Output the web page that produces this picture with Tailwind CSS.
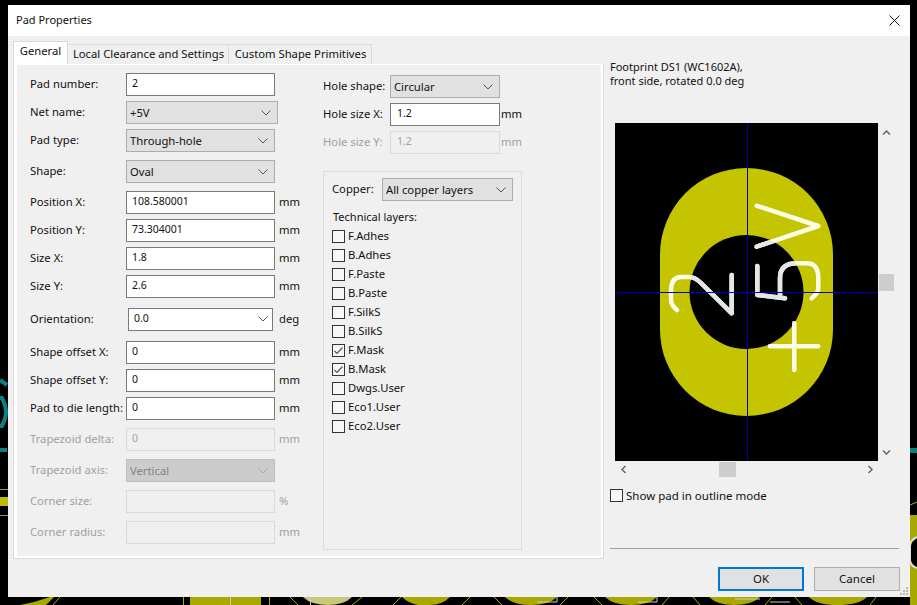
<!DOCTYPE html>
<html><head><meta charset="utf-8"><script src="https://cdn.jsdelivr.net/npm/@tailwindcss/browser@4"></script></head>
<body class="m-0 p-0">
<div class="relative w-[917px] h-[605px] bg-black overflow-hidden font-['Noto_Sans',sans-serif] text-[11.25px] text-[#111]">
  <!-- PCB canvas behind dialog -->
  <svg class="absolute inset-0" width="917" height="605" viewBox="0 0 917 605">
    <g fill="#a8a800">
      <path d="M20 605l14-3 16-5h4l-8 8zM190 597h71v8h-71zM402 597h48q-8 8-20 8h-12q-10-2-16-8zM505 597h52q-8 8-26 8-18 0-26-8zM605 597h52q-8 8-26 8-18 0-26-8zM709 597h51q-8 8-26 8-17 0-25-8zM809 597h58q-8 8-30 8-20 0-28-8z"/>
      <path d="M303 597h49q-8 8-24 8-17 0-25-8z" fill="#c8c878"/>
      <path d="M910 515h7v90h-7z"/>
    </g>
    <path d="M917 538a20 20 0 0 0-7 8v14a20 20 0 0 0 7 8z" fill="#000"/>
    <path d="M917 537q-7 3-7 9v14q0 6 7 8" fill="none" stroke="#ddd" stroke-width="2"/>
    <path d="M0 497h8v9H0z" fill="#bdbd00"/>
    <g fill="none" stroke="#a8a800"><path d="M53 605l7-8M183.500 597v8M269.500 597v8M290 597l8 8M352 605l10-8M393 605l8-8M462 605l8-8M494 597l8 8M560 605l8-8M594 597l8 8M662 605l7-8M693 597l7 8M765 605l7-8M795 597l7 8M870 605l6-8M0 489.500h8M910 505l7-3"/></g>
    <g fill="none" stroke="#ccc"><path d="M230.500 597v8M310.500 597v8M537 602h20v-5M638 602h19v-5M735 599h25M770 602h20"/></g>
    <path d="M0 515.500h8" stroke="#888"/>
    <g fill="none" stroke="#0c7f7f" stroke-width="4"><path d="M0 380l7 5M0 398h2q4 8 4 14t-4 14H0"/></g>
    <path d="M0 448h7v4H0zM910 448h7v5h-7z" fill="#0c7f7f"/>
  </svg>

  <!-- Dialog window -->
  <div class="absolute left-[8px] top-[5px] w-[902px] h-[592px] bg-[#f0f0f0] flex flex-col">
    <div class="h-[31px] shrink-0 bg-white flex items-center justify-between pl-[8px] pr-[10px] text-[11px]">
      <span>Pad Properties</span>
      <svg width="11" height="11" viewBox="0 0 11 11"><path d="M.5.5l10 10M10.500.5l-10 10" stroke="#111" fill="none"/></svg>
    </div>
    <div class="flex flex-1 min-h-0 pl-[5px]">
      <!-- Left notebook -->
      <div class="w-[591px] shrink-0 flex flex-col pt-[5px]">
        <div class="flex h-[23px] items-end">
          <div class="h-[23px] w-[55px] bg-white border border-b-0 border-[#d9d9d9] flex items-center justify-center pb-[3px]">General</div>
          <div class="h-[20px] w-[161px] bg-[#f0f0f0] border-t border-r border-[#d9d9d9] flex items-center justify-center pb-[1px] pl-[1px]">Local Clearance and Settings</div>
          <div class="h-[20px] w-[143px] bg-[#f0f0f0] border-t border-r border-[#d9d9d9] flex items-center justify-center pb-[1px] pl-[1px]">Custom Shape Primitives</div>
        </div>
        <div class="h-[495px] border border-t-0 border-[#d9d9d9] bg-white pl-[3px] pr-[2px] pb-[2px] pt-[1px]">
          <div class="relative h-full bg-[#f0f0f0] flex pl-[13px]">
            <!-- column 1 -->
            <div class="w-[293px] shrink-0 flex flex-col pt-[8px]">
              <div class="flex items-center h-[23px]"><span class="w-[96px] mb-[1px]">Pad number:</span><div class="w-[149px] h-[23px] bg-white border border-[#7a7a7a] px-[5px] pb-[1px] flex items-center text-[10.5px]">2</div></div>
              <div class="flex items-center h-[23px] mt-[5px]"><span class="w-[96px] mb-[1px]">Net name:</span><div class="w-[152px] h-[23px] bg-[#e1e1e1] border border-[#adadad] pl-[3px] pr-[6px] pt-[1px] flex items-center justify-between">+5V<svg width="10" height="6" viewBox="0 0 10 6"><path d="M.5.500l4.500 4.500 4.500-4.500" fill="none" stroke="#555"/></svg></div></div>
              <div class="flex items-center h-[23px] mt-[5px]"><span class="w-[96px] mb-[1px]">Pad type:</span><div class="w-[149px] h-[23px] bg-[#e1e1e1] border border-[#adadad] pl-[3px] pr-[6px] pt-[1px] flex items-center justify-between">Through-hole<svg width="10" height="6" viewBox="0 0 10 6"><path d="M.5.500l4.500 4.500 4.500-4.500" fill="none" stroke="#555"/></svg></div></div>
              <div class="flex items-center h-[23px] mt-[8px]"><span class="w-[96px] mb-[1px]">Shape:</span><div class="w-[149px] h-[23px] bg-[#e1e1e1] border border-[#adadad] pl-[3px] pr-[6px] pt-[1px] flex items-center justify-between">Oval<svg width="10" height="6" viewBox="0 0 10 6"><path d="M.5.500l4.500 4.500 4.500-4.500" fill="none" stroke="#555"/></svg></div></div>
              <div class="flex items-center h-[23px] mt-[8px]"><span class="w-[96px] mb-[1px]">Position X:</span><div class="w-[149px] h-[23px] bg-white border border-[#7a7a7a] px-[5px] pb-[1px] flex items-center text-[10.5px]">108.580001</div><span class="ml-[4px]">mm</span></div>
              <div class="flex items-center h-[23px] mt-[5px]"><span class="w-[96px] mb-[1px]">Position Y:</span><div class="w-[149px] h-[23px] bg-white border border-[#7a7a7a] px-[5px] pb-[1px] flex items-center text-[10.5px]">73.304001</div><span class="ml-[4px]">mm</span></div>
              <div class="flex items-center h-[23px] mt-[5px]"><span class="w-[96px] mb-[1px]">Size X:</span><div class="w-[149px] h-[23px] bg-white border border-[#7a7a7a] px-[5px] pb-[1px] flex items-center text-[10.5px]">1.8</div><span class="ml-[4px]">mm</span></div>
              <div class="flex items-center h-[23px] mt-[5px]"><span class="w-[96px] mb-[1px]">Size Y:</span><div class="w-[149px] h-[23px] bg-white border border-[#7a7a7a] px-[5px] pb-[1px] flex items-center text-[10.5px]">2.6</div><span class="ml-[4px]">mm</span></div>
              <div class="flex items-center h-[23px] mt-[10px]"><span class="w-[98px] mb-[1px]">Orientation:</span><div class="w-[145px] h-[23px] bg-white border border-[#7a7a7a] pl-[5px] pr-[4px] pb-[1px] flex items-center justify-between text-[10.5px]">0.0<svg width="10" height="6" viewBox="0 0 10 6"><path d="M.5.500l4.500 4.500 4.500-4.500" fill="none" stroke="#555"/></svg></div><span class="ml-[6px]">deg</span></div>
              <div class="flex items-center h-[23px] mt-[10px]"><span class="w-[96px] mb-[1px]">Shape offset X:</span><div class="w-[149px] h-[23px] bg-white border border-[#7a7a7a] px-[5px] pb-[1px] flex items-center text-[10.5px]">0</div><span class="ml-[4px]">mm</span></div>
              <div class="flex items-center h-[23px] mt-[5px]"><span class="w-[96px] mb-[1px]">Shape offset Y:</span><div class="w-[149px] h-[23px] bg-white border border-[#7a7a7a] px-[5px] pb-[1px] flex items-center text-[10.5px]">0</div><span class="ml-[4px]">mm</span></div>
              <div class="flex items-center h-[23px] mt-[5px]"><span class="w-[96px] mb-[1px] whitespace-nowrap">Pad to die length:</span><div class="w-[149px] h-[23px] bg-white border border-[#7a7a7a] px-[5px] pb-[1px] flex items-center text-[10.5px]">0</div><span class="ml-[4px]">mm</span></div>
              <div class="flex items-center h-[23px] mt-[8px] text-[#a0a0a0]"><span class="w-[96px] mb-[1px]">Trapezoid delta:</span><div class="w-[149px] h-[23px] bg-[#f0f0f0] border border-[#d9d9d9] px-[5px] pb-[1px] flex items-center text-[10.5px]">0</div><span class="ml-[4px]">mm</span></div>
              <div class="flex items-center h-[23px] mt-[8px] text-[#a0a0a0]"><span class="w-[96px] mb-[1px]">Trapezoid axis:</span><div class="w-[149px] h-[23px] bg-[#cccccc] border border-[#bfbfbf] pl-[3px] pr-[6px] pt-[1px] flex items-center justify-between text-[#838383]">Vertical<svg width="10" height="6" viewBox="0 0 10 6"><path d="M.5.500l4.500 4.500 4.500-4.500" fill="none" stroke="#a8a8a8"/></svg></div></div>
              <div class="flex items-center h-[23px] mt-[8px] text-[#a0a0a0]"><span class="w-[96px] mb-[1px]">Corner size:</span><div class="w-[149px] h-[23px] bg-[#f0f0f0] border border-[#d9d9d9]"></div><span class="ml-[4px]">%</span></div>
              <div class="flex items-center h-[23px] mt-[8px] text-[#a0a0a0]"><span class="w-[96px] mb-[1px]">Corner radius:</span><div class="w-[149px] h-[23px] bg-[#f0f0f0] border border-[#d9d9d9]"></div><span class="ml-[4px]">mm</span></div>
            </div>
            <!-- column 2 -->
            <div class="w-[200px] shrink-0 flex flex-col pt-[10px]">
              <div class="flex items-center h-[23px]"><span class="w-[67px] mb-[1px]">Hole shape:</span><div class="w-[110px] h-[23px] bg-[#e1e1e1] border border-[#adadad] pl-[3px] pr-[6px] pt-[1px] flex items-center justify-between">Circular<svg width="10" height="6" viewBox="0 0 10 6"><path d="M.5.500l4.500 4.500 4.500-4.500" fill="none" stroke="#555"/></svg></div></div>
              <div class="flex items-center h-[23px] mt-[5px]"><span class="w-[67px] mb-[1px]">Hole size X:</span><div class="w-[110px] h-[23px] bg-white border border-[#7a7a7a] px-[6px] pb-[1px] flex items-center text-[10.5px]">1.2</div><span class="ml-[1px]">mm</span></div>
              <div class="flex items-center h-[23px] mt-[5px] text-[#a0a0a0]"><span class="w-[67px] mb-[1px]">Hole size Y:</span><div class="w-[110px] h-[23px] bg-[#f0f0f0] border border-[#d9d9d9] px-[6px] pb-[1px] flex items-center text-[10.5px]">1.2</div><span class="ml-[1px]">mm</span></div>
              <div class="w-[199px] h-[379px] mt-[17px] border border-[#dcdcdc] pl-[8px] pt-[6px] flex flex-col">
                <div class="flex items-center h-[23px]"><span class="w-[50px] mb-[1px]">Copper:</span><div class="w-[131px] h-[23px] bg-[#e1e1e1] border border-[#adadad] pl-[3px] pr-[6px] pt-[1px] flex items-center justify-between">All copper layers<svg width="10" height="6" viewBox="0 0 10 6"><path d="M.5.500l4.500 4.500 4.500-4.500" fill="none" stroke="#555"/></svg></div></div>
                <div class="mt-[8px] pl-[1px] h-[16px] leading-[16px] text-[11px]">Technical layers:</div>
                <div class="flex flex-col mt-[2px]">
                  <label class="h-[19px] flex items-center gap-[3px]"><span class="w-[13px] h-[13px] bg-[#f7f7f7] border border-[#333]"></span>F.Adhes</label>
                  <label class="h-[19px] flex items-center gap-[3px]"><span class="w-[13px] h-[13px] bg-[#f7f7f7] border border-[#333]"></span>B.Adhes</label>
                  <label class="h-[19px] flex items-center gap-[3px]"><span class="w-[13px] h-[13px] bg-[#f7f7f7] border border-[#333]"></span>F.Paste</label>
                  <label class="h-[19px] flex items-center gap-[3px]"><span class="w-[13px] h-[13px] bg-[#f7f7f7] border border-[#333]"></span>B.Paste</label>
                  <label class="h-[19px] flex items-center gap-[3px]"><span class="w-[13px] h-[13px] bg-[#f7f7f7] border border-[#333]"></span>F.SilkS</label>
                  <label class="h-[19px] flex items-center gap-[3px]"><span class="w-[13px] h-[13px] bg-[#f7f7f7] border border-[#333]"></span>B.SilkS</label>
                  <label class="h-[19px] flex items-center gap-[3px]"><span class="w-[13px] h-[13px] bg-[#f7f7f7] border border-[#333] flex items-center justify-center"><svg width="11" height="11" viewBox="0 0 11 11"><path d="M1.500 6l2.500 2.500 5.500-6" fill="none" stroke="#555" stroke-width="1.200"/></svg></span>F.Mask</label>
                  <label class="h-[19px] flex items-center gap-[3px]"><span class="w-[13px] h-[13px] bg-[#f7f7f7] border border-[#333] flex items-center justify-center"><svg width="11" height="11" viewBox="0 0 11 11"><path d="M1.500 6l2.500 2.500 5.500-6" fill="none" stroke="#555" stroke-width="1.200"/></svg></span>B.Mask</label>
                  <label class="h-[19px] flex items-center gap-[3px]"><span class="w-[13px] h-[13px] bg-[#f7f7f7] border border-[#333]"></span>Dwgs.User</label>
                  <label class="h-[19px] flex items-center gap-[3px]"><span class="w-[13px] h-[13px] bg-[#f7f7f7] border border-[#333]"></span>Eco1.User</label>
                  <label class="h-[19px] flex items-center gap-[3px]"><span class="w-[13px] h-[13px] bg-[#f7f7f7] border border-[#333]"></span>Eco2.User</label>
                </div>
              </div>
            </div>
          </div>
        </div>
      </div>
      <!-- Right preview -->
      <div class="flex-1 flex flex-col pl-[6px] pr-[11px] min-w-0">
        <div class="pt-[24px] h-[87px] leading-[14px] text-[11px] shrink-0">Footprint DS1 (WC1602A),<br>front side, rotated 0.0 deg</div>
        <div class="flex">
          <div class="ml-[5px] w-[263px] h-[338px] bg-black relative shrink-0">
            <svg width="263" height="338" viewBox="0 0 263 338" class="block">
              <defs>
                <clipPath id="hole"><circle cx="131.500" cy="169" r="57"/></clipPath>
                <g id="silk" fill="none" stroke-width="4.500" stroke-linecap="round" stroke-linejoin="round">
                  <path d="M141.700 82.700L203.300 103 141.700 123.700"/>
                  <path d="M142.300 143v29l27.700 3.300"/>
                  <path d="M165 172v-16.700q0-15 16.700-15h10q11.600 0 11.600 15v10q0 5-6.600 10"/>
                  <path d="M179.300 200.300V247M155 223.300h48.300"/>
                  <path d="M116.700 152v38.300L86 160q-6-6-12-6h-8q-10 0-10 14v9q0 5 6 10"/>
                </g>
              </defs>
              <path d="M45 131.500a86.500 86.500 0 0 1 173 0v75a86.500 86.500 0 0 1-173 0z" fill="#c4c400"/>
              <circle cx="131.500" cy="169" r="57" fill="#000"/>
              <use href="#silk" stroke="#fdfde6"/>
              <g clip-path="url(#hole)"><use href="#silk" stroke="#e6e6e6"/></g>
              <path d="M132.500 0v338" stroke="#0000a8"/>
              <path d="M0 169.500h263" stroke="#0000c8"/>
            </svg>
          </div>
          <div class="w-[15px] ml-[1px] h-[338px] flex flex-col justify-between items-center relative">
            <svg class="mt-[6px]" width="9" height="7" viewBox="0 0 9 7"><path d="M1 5.500l3.500-3.500 3.500 3.500" fill="none" stroke="#666" stroke-width="1.500"/></svg>
            <div class="absolute left-0 top-[151px] w-[15px] h-[17px] bg-[#cdcdcd]"></div>
            <svg class="mb-[5px]" width="9" height="7" viewBox="0 0 9 7"><path d="M1 1.500l3.500 3.500 3.500-3.500" fill="none" stroke="#666" stroke-width="1.500"/></svg>
          </div>
        </div>
        <div class="ml-[5px] w-[263px] h-[17px] flex items-center justify-between relative pl-[5px] pr-[4px]">
          <svg width="7" height="9" viewBox="0 0 7 9"><path d="M5.500 1l-3.500 3.500 3.500 3.500" fill="none" stroke="#666" stroke-width="1.500"/></svg>
          <div class="absolute left-[104px] top-[1px] w-[17px] h-[15px] bg-[#cdcdcd]"></div>
          <svg width="7" height="9" viewBox="0 0 7 9"><path d="M1.500 1l3.500 3.500-3.500 3.500" fill="none" stroke="#666" stroke-width="1.500"/></svg>
        </div>
        <label class="flex items-center gap-[3px] mt-[9px] h-[17px] text-[11.5px]"><span class="w-[13px] h-[13px] bg-[#f7f7f7] border border-[#333]"></span>Show pad in outline mode</label>
        <div class="mt-[44px] w-[289px] h-px bg-[#a0a0a0]"></div>
        <div class="flex justify-end gap-[10px] mt-[18px] w-[290px]">
          <div class="w-[86px] h-[24px] bg-[#e1e1e1] border-2 border-[#0078d7] flex items-center justify-center text-[11.5px]">OK</div>
          <div class="w-[86px] h-[24px] bg-[#e1e1e1] border border-[#adadad] flex items-center justify-center text-[11.5px]">Cancel</div>
        </div>
      </div>
    </div>
    <svg class="absolute right-[2px] bottom-[2px]" width="8" height="8" viewBox="0 0 8 8"><path d="M6 0h2v2H6zM3 3h2v2H3zM6 3h2v2H6zM0 6h2v2H0zM3 6h2v2H3zM6 6h2v2H6z" fill="#bcbcbc"/></svg>
  </div>
</div>
</body></html>
